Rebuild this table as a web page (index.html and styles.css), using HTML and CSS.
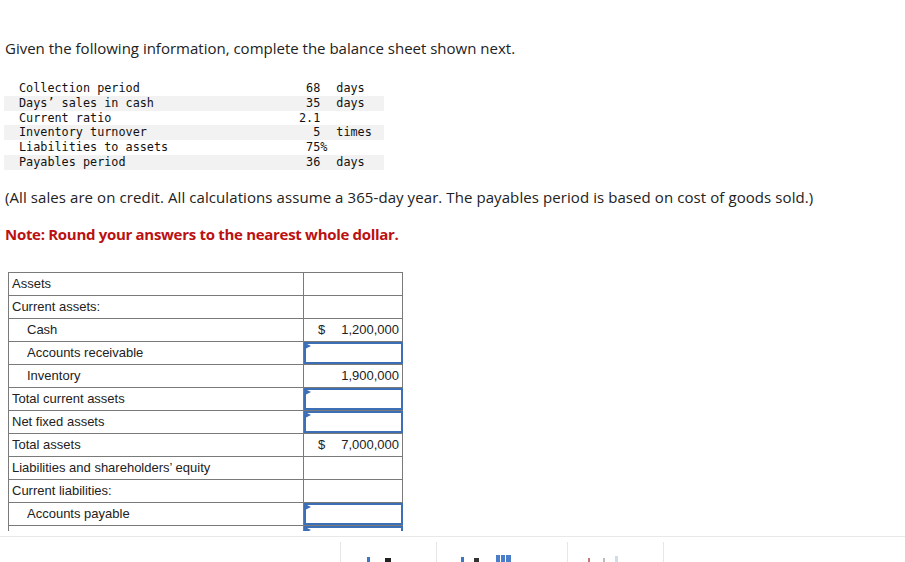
FILE: index.html
```html
<!DOCTYPE html>
<html>
<head>
<meta charset="utf-8">
<link rel="stylesheet" href="styles.css">
</head>
<body>
<div class="page">
  <p class="intro">Given the following information, complete the balance sheet shown next.</p>
  <table class="data">
    <tr><td class="lbl">Collection period</td><td class="num">68</td><td class="unit">days</td></tr>
    <tr class="alt"><td class="lbl">Days’ sales in cash</td><td class="num">35</td><td class="unit">days</td></tr>
    <tr><td class="lbl">Current ratio</td><td class="num">2.1</td><td class="unit"></td></tr>
    <tr class="alt"><td class="lbl">Inventory turnover</td><td class="num">5</td><td class="unit">times</td></tr>
    <tr><td class="lbl">Liabilities to assets</td><td class="num">75<span class="pct">%</span></td><td class="unit"></td></tr>
    <tr class="alt"><td class="lbl">Payables period</td><td class="num">36</td><td class="unit">days</td></tr>
  </table>
  <p class="assume">(All sales are on credit. All calculations assume a 365-day year. The payables period is based on cost of goods sold.)</p>
  <p class="note">Note: Round your answers to the nearest whole dollar.</p>
  <table class="bs">
    <tr><td class="c1">Assets</td><td class="c2"></td></tr>
    <tr><td class="c1">Current assets:</td><td class="c2"></td></tr>
    <tr><td class="c1 ind">Cash</td><td class="c2"><div class="val"><span>$</span><span>1,200,000</span></div></td></tr>
    <tr><td class="c1 ind">Accounts receivable</td><td class="c2 in"><div class="box"></div></td></tr>
    <tr><td class="c1 ind">Inventory</td><td class="c2"><div class="val"><span></span><span>1,900,000</span></div></td></tr>
    <tr><td class="c1">Total current assets</td><td class="c2 in"><div class="box"></div></td></tr>
    <tr><td class="c1">Net fixed assets</td><td class="c2 in"><div class="box"></div></td></tr>
    <tr><td class="c1">Total assets</td><td class="c2"><div class="val"><span>$</span><span>7,000,000</span></div></td></tr>
    <tr><td class="c1">Liabilities and shareholders’ equity</td><td class="c2"></td></tr>
    <tr><td class="c1">Current liabilities:</td><td class="c2"></td></tr>
    <tr><td class="c1 ind">Accounts payable</td><td class="c2 in"><div class="box"></div></td></tr>
    <tr><td class="c1 ind">Short-term debt</td><td class="c2 in"><div class="box"></div></td></tr>
  </table>
</div>
<div class="toolbar">
  <div class="tb-seg"><span class="ic blue"></span><span class="ic dark"></span></div>
  <div class="tb-seg"><span class="ic blue"></span><span class="ic dark"></span><span class="ic sq"></span></div>
  <div class="tb-seg"><span class="ic red"></span><span class="ic gray"></span><span class="ic lb"></span></div>
  <div class="tb-seg"></div>
</div>
</body>
</html>
```
FILE: styles.css
```css
html, body { margin: 0; padding: 0; background: #fff; }
body { font-family: "Open Sans", "Liberation Sans", sans-serif; color: #222; }
.page { height: 531px; overflow: hidden; }
.intro { margin: 0; padding: 38px 0 0 5px; font-size: 15px; line-height: 20px; color: #222; }
.data { border-collapse: collapse; margin: 23px 0 0 4px; font-family: "DejaVu Sans Mono", "Liberation Mono", monospace; font-size: 11.8px; color: #111; }
.data td { height: 14.8px; padding: 0; line-height: 14.8px; white-space: pre; }
.data tr.alt td { background: #f2f2f2; }
.data .lbl { padding-left: 15px; width: 280px; }
.data .num { text-align: right; width: 15px; }
.data .pct { display: inline-block; width: 0; overflow: visible; }
.data .unit { padding-left: 16px; width: 48px; }
.assume { margin: 17px 0 0 5px; font-size: 15px; line-height: 20px; letter-spacing: 0.08px; }
.note { margin: 17px 0 0 5px; font-size: 15px; line-height: 20px; font-weight: 700; color: #b11; letter-spacing: -0.3px; }
.bs { border-collapse: collapse; margin: 28px 0 0 8px; font-family: "Liberation Sans", Arial, sans-serif; font-size: 13px; color: #222; }
.bs td { border: 1px solid #7a7a7a; height: 22px; padding: 0; }
.bs .c1 { width: 291px; padding-left: 3px; }
.bs .c1.ind { padding-left: 18px; width: 276px; }
.bs .c2 { width: 98px; position: relative; }
.val { display: flex; justify-content: space-between; padding: 0 3px 0 14px; }
.box { position: absolute; left: 0; top: 0; right: -1px; bottom: 0; border: 2px solid #3d6fb6; }
.box::before { content: ""; position: absolute; left: -1px; top: -1px; border-left: 6px solid #3d6fb6; border-top: 3px solid transparent; border-bottom: 3px solid transparent; }
.toolbar { margin-top: 5px; border-top: 1px solid #e8e8e8; height: 25px; display: flex; padding-left: 340px; }
.tb-seg { border-left: 1px solid #e6e6e6; margin-top: 5px; height: 20px; position: relative; }
.tb-seg:nth-child(1) { width: 95px; }
.tb-seg:nth-child(2) { width: 130px; }
.tb-seg:nth-child(3) { width: 95px; }
.tb-seg:nth-child(4) { width: 200px; }
.ic { position: absolute; display: block; }
.tb-seg:nth-child(1) .blue { left: 26px; top: 15px; width: 3px; height: 5px; background: #3b78c4; }
.tb-seg:nth-child(1) .dark { left: 44px; top: 16px; width: 6px; height: 4px; background: #222; }
.tb-seg:nth-child(2) .blue { left: 24px; top: 15px; width: 3px; height: 5px; background: #3b78c4; }
.tb-seg:nth-child(2) .dark { left: 37px; top: 16px; width: 5px; height: 4px; background: #333; }
.tb-seg:nth-child(2) .sq { left: 59px; top: 13px; width: 15px; height: 7px; background: linear-gradient(90deg, #4a7ec9 0 4px, #fff 4px 5px, #4a7ec9 5px 9px, #fff 9px 10px, #4a7ec9 10px); }
.tb-seg:nth-child(3) .red { left: 20px; top: 16px; width: 2px; height: 4px; background: #c77; }
.tb-seg:nth-child(3) .gray { left: 35px; top: 16px; width: 2px; height: 4px; background: #bbb; }
.tb-seg:nth-child(3) .lb { left: 47px; top: 14px; width: 3px; height: 6px; background: #cde; }
```
